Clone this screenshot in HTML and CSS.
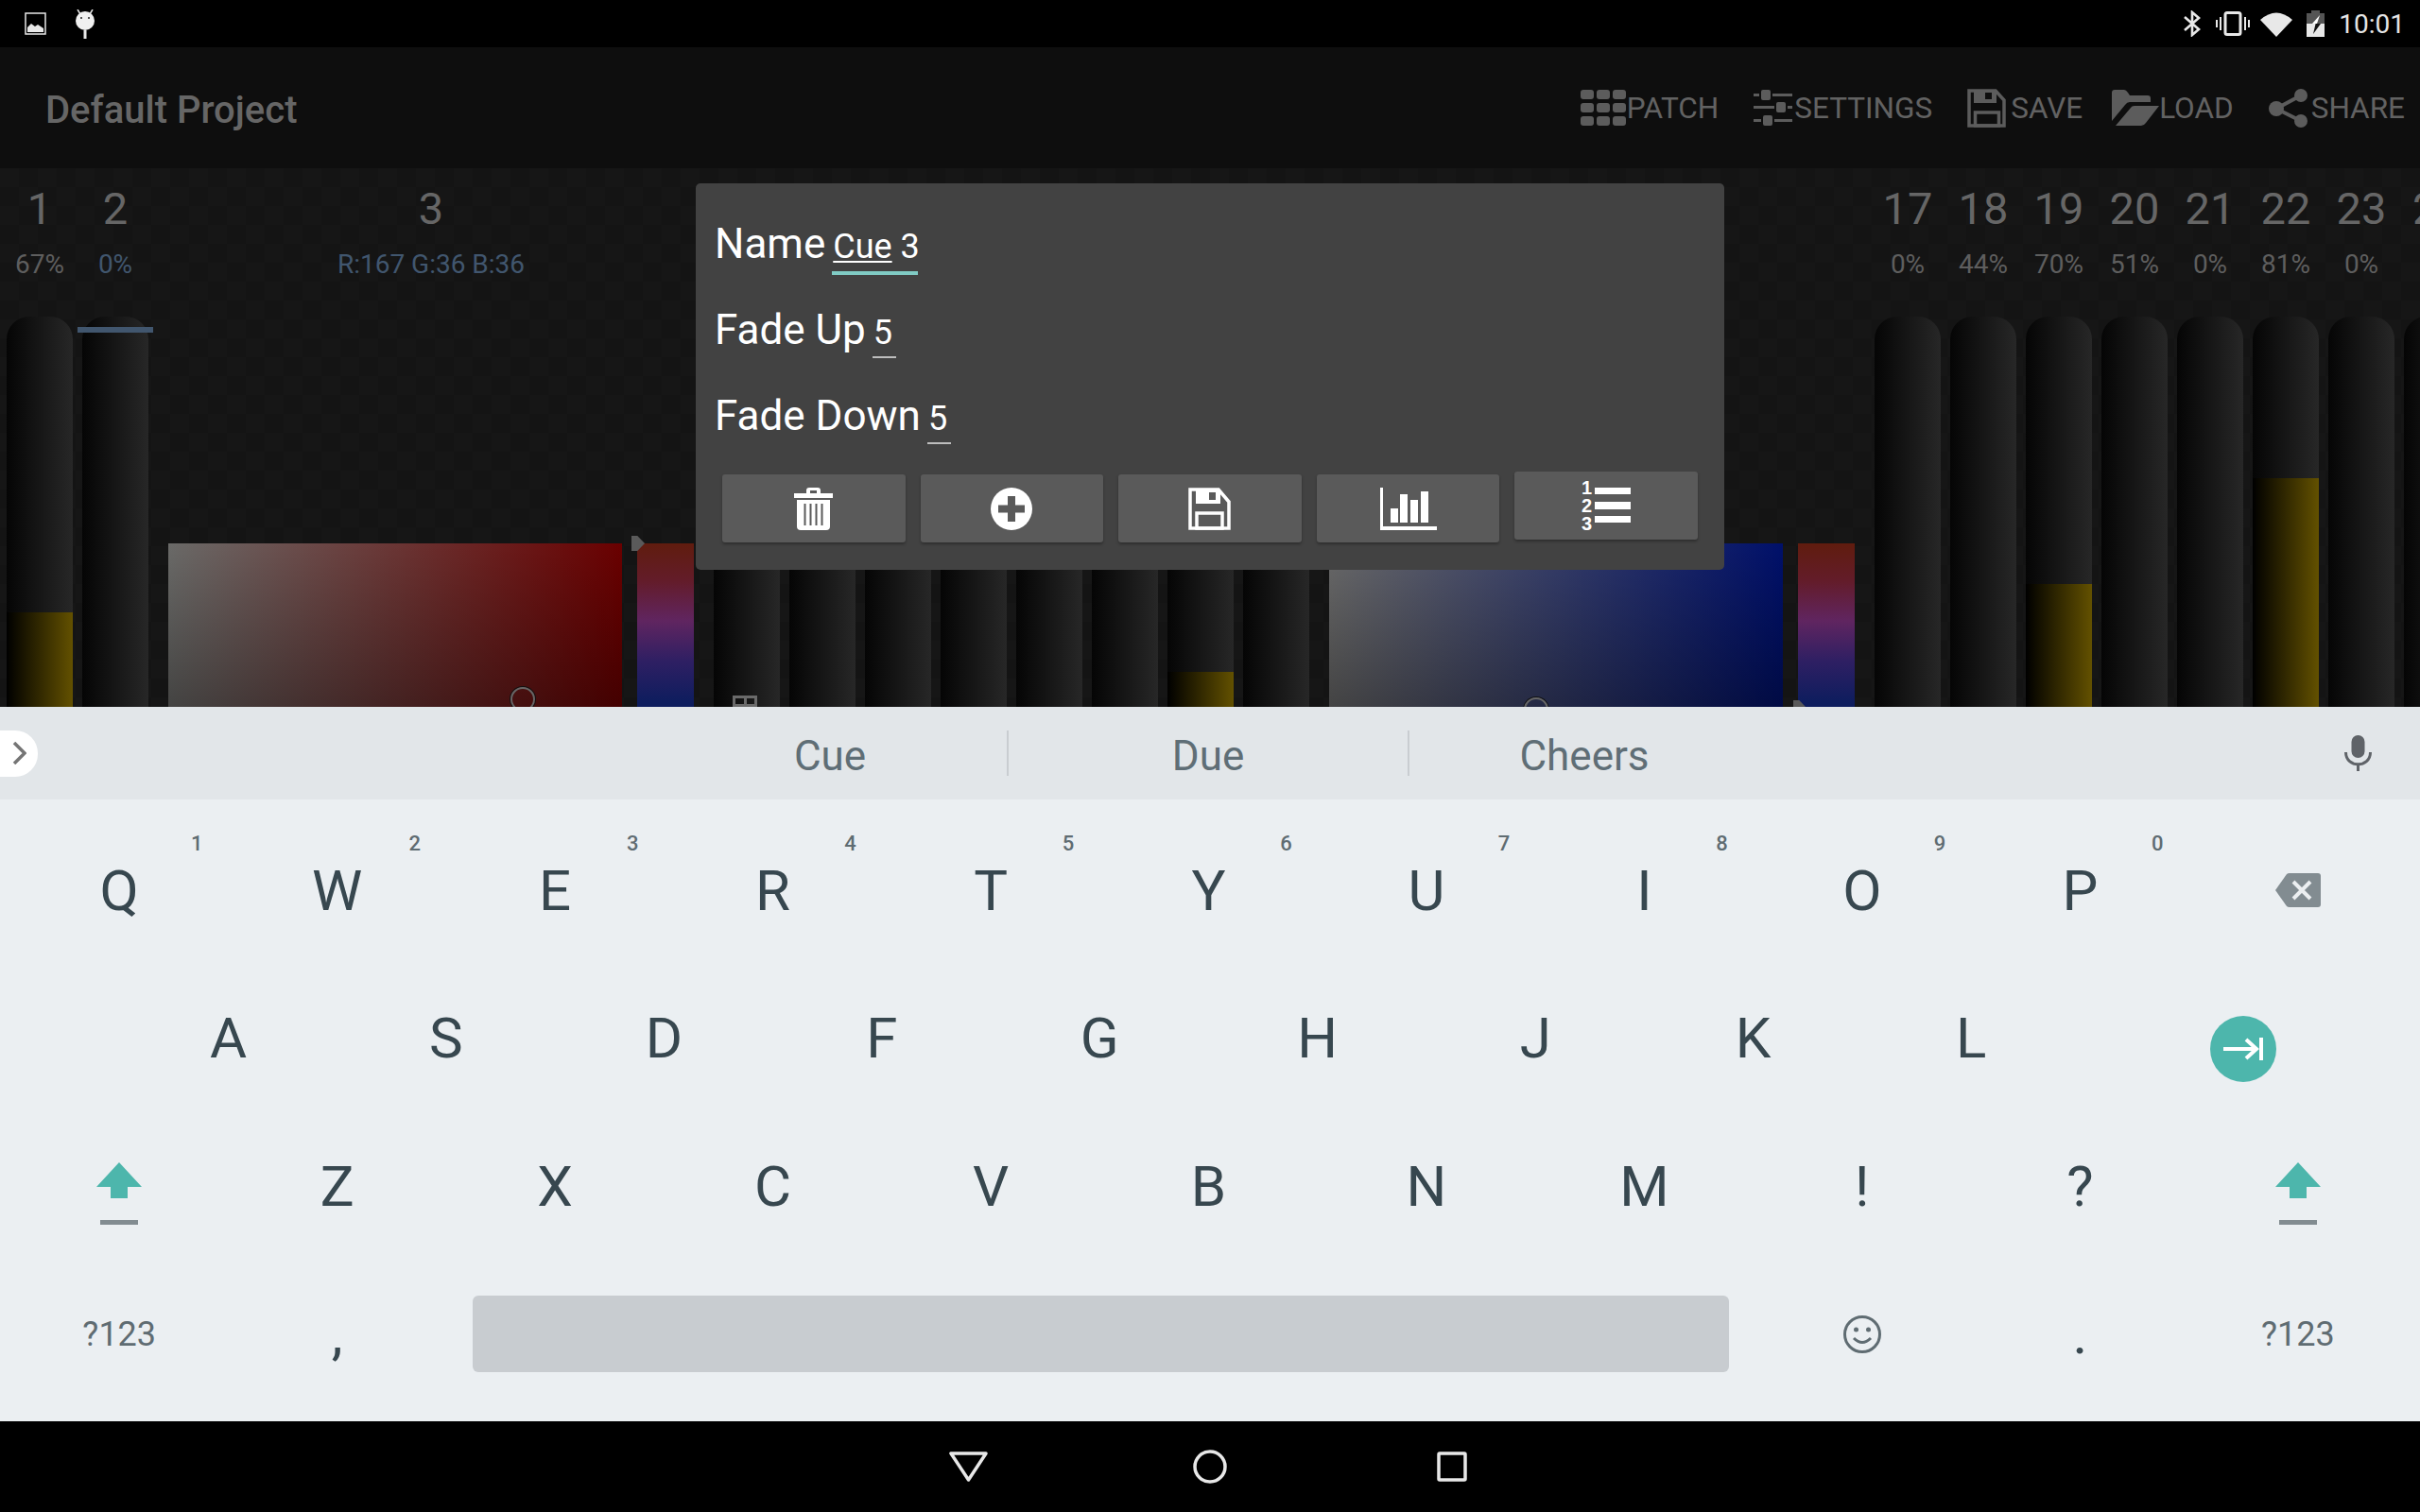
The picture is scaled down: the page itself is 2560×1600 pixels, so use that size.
FILE: index.html
```html
<!DOCTYPE html>
<html lang="en">

<head>
    <meta charset="UTF-8">
    <title>Default Project</title>
    <link rel="stylesheet" href="styles.css">
</head>

<body>
    <div class="page">
        <div class="status-bar">
            <div class="status-left">
                <svg class="ic-image" viewBox="0 0 23 24">
                    <rect x="1" y="1" width="21" height="22" fill="none" stroke="#e8e8e8" stroke-width="1.5" />
                    <path d="M3 21 V16 L7 12 L11 15 L14 13 L20 17 V21 Z" fill="#e8e8e8" />
                </svg>
                <svg class="ic-bug" viewBox="0 0 20 31">
                    <path d="M2 0 L5 5 M18 0 L15 5" stroke="#e8e8e8" stroke-width="1.5" />
                    <ellipse cx="10" cy="12" rx="10" ry="10" fill="#f0f0f0" />
                    <circle cx="6" cy="9" r="1" fill="#222" />
                    <circle cx="14" cy="9" r="1" fill="#222" />
                    <rect x="8.5" y="22" width="3" height="9" fill="#e8e8e8" />
                </svg>
            </div>
            <div class="status-right">
                <svg class="ic-bt" viewBox="0 0 18 28">
                    <path d="M1 7 L16 20 L9 26 V2 L16 8 L1 21" fill="none" stroke="#e8e8e8" stroke-width="2.6" />
                </svg>
                <svg class="ic-vibrate" viewBox="0 0 36 26">
                    <rect x="10" y="1.5" width="16" height="23" rx="2" fill="none" stroke="#e8e8e8" stroke-width="3" />
                    <path d="M1 9 V17 M5 6 V20 M31 6 V20 M35 9 V17" stroke="#e8e8e8" stroke-width="2" />
                </svg>
                <svg class="ic-wifi" viewBox="0 0 34 27">
                    <path d="M0 9 Q17 -6 34 9 L17 27 Z" fill="#e8e8e8" />
                </svg>
                <svg class="ic-battery" viewBox="0 0 19 28">
                    <path d="M5 0 H14 V3 H19 V14 H0 V3 H5 Z" fill="#555" />
                    <rect x="0" y="14" width="19" height="14" fill="#e8e8e8" />
                    <path d="M14 5 L6 14 H11 Z" fill="#fff" />
                    <path d="M6 14 H15 L7 25 L9.6 14 Z" fill="#111" />
                </svg>
                <span class="clock">10:01</span>
            </div>
        </div>

        <div class="app-bar">
            <div class="project-title">Default Project</div>
            <div class="actions">
                <div class="action patch">
                    <svg class="ic-patch" viewBox="0 0 48 38" fill="#5c5c5c">
                        <rect x="0" y="0" width="14" height="10" rx="3" />
                        <rect x="17" y="0" width="14" height="10" rx="3" />
                        <rect x="34" y="0" width="14" height="10" rx="3" />
                        <rect x="0" y="14" width="14" height="10" rx="3" />
                        <rect x="17" y="14" width="14" height="10" rx="3" />
                        <rect x="34" y="14" width="14" height="10" rx="3" />
                        <rect x="0" y="28" width="14" height="10" rx="3" />
                        <rect x="17" y="28" width="14" height="10" rx="3" />
                        <rect x="34" y="28" width="14" height="10" rx="3" />
                    </svg>
                    PATCH
                </div>
                <div class="action">
                    <svg class="ic-settings" viewBox="0 0 41 38" fill="#5c5c5c">
                        <rect x="0" y="4" width="6" height="3" />
                        <rect x="8" y="0" width="10" height="11" rx="2" />
                        <rect x="20" y="4" width="21" height="3" />
                        <rect x="0" y="17" width="22" height="3" />
                        <rect x="24" y="13" width="10" height="11" rx="2" />
                        <rect x="36" y="17" width="5" height="3" />
                        <rect x="0" y="31" width="8" height="3" />
                        <rect x="10" y="27" width="10" height="11" rx="2" />
                        <rect x="22" y="31" width="19" height="3" />
                    </svg>
                    SETTINGS
                </div>
                <div class="action save">
                    <svg class="ic-save" viewBox="0 0 41 41" fill="none" stroke="#5c5c5c">
                        <path d="M2 2 H30 L39 12 V39 H2 Z" stroke-width="3.5" />
                        <path d="M7 2 H31 V15 H7 Z M19 4 V11 H26 V4 Z" fill="#5c5c5c" fill-rule="evenodd" stroke="none" />
                        <rect x="8.5" y="25" width="25" height="14" stroke-width="3.5" />
                    </svg>
                    SAVE
                </div>
                <div class="action load">
                    <svg class="ic-load" viewBox="0 0 50 38" fill="#5c5c5c">
                        <path d="M0 3 Q0 0 3 0 H13 Q15 0 17 3 L19 6 H38 Q41 6 41 9 V13 H19 Q16 13 14 16 L0 33 Z" />
                        <path d="M4 38 L20 19 Q21 17 24 17 H50 L36 35 Q34 38 31 38 Z" />
                    </svg>
                    LOAD
                </div>
                <div class="action">
                    <svg class="ic-share" viewBox="0 0 43 41">
                        <path d="M34 7 L8 21 L34 34" fill="none" stroke="#5c5c5c" stroke-width="4" />
                        <circle cx="34" cy="7" r="7" fill="#5c5c5c" />
                        <circle cx="8" cy="21" r="8" fill="#5c5c5c" />
                        <circle cx="34" cy="34" r="7" fill="#5c5c5c" />
                    </svg>
                    SHARE
                </div>
            </div>
        </div>

        <div class="channels">
            <div class="channel">
                <div class="ch-num">1</div>
                <div class="ch-val">67%</div>
                <div class="fader">
                    <div class="fill" style="height: 68.5%"></div>
                </div>
            </div>
            <div class="channel">
                <div class="ch-num">2</div>
                <div class="ch-val blue">0%</div>
                <div class="fader"></div>
                <div class="selected-bar"></div>
            </div>
            <div class="channel color">
                <div class="ch-num">3</div>
                <div class="ch-val blue">R:167 G:36 B:36</div>
                <div class="picker">
                    <div class="sv red">
                        <div class="sv-ring ring-red"></div>
                    </div>
                    <div class="hue"></div>
                    <div class="hue-handle handle-red"></div>
                </div>
            </div>
            <div class="channel">
                <div class="fader covered">
                    <div class="grid-mark"></div>
                </div>
            </div>
            <div class="channel">
                <div class="fader covered"></div>
            </div>
            <div class="channel">
                <div class="fader covered"></div>
            </div>
            <div class="channel">
                <div class="fader covered"></div>
            </div>
            <div class="channel">
                <div class="fader covered"></div>
            </div>
            <div class="channel">
                <div class="fader covered"></div>
            </div>
            <div class="channel">
                <div class="fader covered">
                    <div class="fill" style="height: 62.2%"></div>
                </div>
            </div>
            <div class="channel">
                <div class="fader covered"></div>
            </div>
            <div class="channel color">
                <div class="picker covered">
                    <div class="sv navy">
                        <div class="sv-ring ring-navy"></div>
                    </div>
                    <div class="hue"></div>
                    <div class="hue-handle handle-navy"></div>
                </div>
            </div>
            <div class="channel">
                <div class="ch-num">17</div>
                <div class="ch-val">0%</div>
                <div class="fader"></div>
            </div>
            <div class="channel">
                <div class="ch-num">18</div>
                <div class="ch-val">44%</div>
                <div class="fader">
                    <div class="fill" style="height: 45%"></div>
                </div>
            </div>
            <div class="channel">
                <div class="ch-num">19</div>
                <div class="ch-val">70%</div>
                <div class="fader">
                    <div class="fill" style="height: 71.6%"></div>
                </div>
            </div>
            <div class="channel">
                <div class="ch-num">20</div>
                <div class="ch-val">51%</div>
                <div class="fader">
                    <div class="fill" style="height: 52.1%"></div>
                </div>
            </div>
            <div class="channel">
                <div class="ch-num">21</div>
                <div class="ch-val">0%</div>
                <div class="fader"></div>
            </div>
            <div class="channel">
                <div class="ch-num">22</div>
                <div class="ch-val">81%</div>
                <div class="fader">
                    <div class="fill" style="height: 82.8%"></div>
                </div>
            </div>
            <div class="channel">
                <div class="ch-num">23</div>
                <div class="ch-val">0%</div>
                <div class="fader"></div>
            </div>
            <div class="channel last">
                <div class="ch-num">24</div>
                <div class="fader covered"></div>
            </div>
        </div>

        <div class="keyboard">
            <div class="suggestions">
                <div class="strip-left">
                    <div class="more-pill">
                        <svg viewBox="0 0 15 24" width="15" height="24">
                            <path d="M2 1 L13 12 L2 23" fill="none" stroke="#757575" stroke-width="3.5" />
                        </svg>
                    </div>
                </div>
                <div class="suggestion first">Cue</div>
                <div class="suggestion">Due</div>
                <div class="suggestion last">Cheers</div>
                <div class="strip-right">
                    <svg viewBox="0 0 29 38" width="29" height="38">
                        <rect x="7.5" y="0" width="14" height="24" rx="7" fill="#5f6368" />
                        <path d="M1.5 18 C1.5 35 27.5 35 27.5 18" fill="none" stroke="#5f6368" stroke-width="3" />
                        <rect x="13" y="30" width="3" height="8" fill="#5f6368" />
                    </svg>
                </div>
            </div>

            <div class="keys">
                <div class="key-row">
                    <div class="key">Q<span class="hint">1</span></div>
                    <div class="key">W<span class="hint">2</span></div>
                    <div class="key">E<span class="hint">3</span></div>
                    <div class="key">R<span class="hint">4</span></div>
                    <div class="key">T<span class="hint">5</span></div>
                    <div class="key">Y<span class="hint">6</span></div>
                    <div class="key">U<span class="hint">7</span></div>
                    <div class="key">I<span class="hint">8</span></div>
                    <div class="key">O<span class="hint">9</span></div>
                    <div class="key">P<span class="hint">0</span></div>
                    <div class="key">
                        <svg viewBox="0 0 48 36" width="48" height="36">
                            <path d="M0 18 L12 1 Q13 0 15 0 H45 Q48 0 48 3 V33 Q48 36 45 36 H15 Q13 36 12 35 Z" fill="#828c91" />
                            <path d="M19 9 L37 27 M37 9 L19 27" stroke="#eceff1" stroke-width="4" />
                        </svg>
                    </div>
                </div>
                <div class="key-row">
                    <div class="key half"></div>
                    <div class="key">A</div>
                    <div class="key">S</div>
                    <div class="key">D</div>
                    <div class="key">F</div>
                    <div class="key">G</div>
                    <div class="key">H</div>
                    <div class="key">J</div>
                    <div class="key">K</div>
                    <div class="key">L</div>
                    <div class="key wide">
                        <div class="enter-btn">
                            <svg viewBox="0 0 42 24" width="42" height="24">
                                <path d="M0 12 H36 M24 2 L35 12 L24 22" fill="none" stroke="#fff" stroke-width="4" />
                                <rect x="38" y="0" width="4" height="24" fill="#fff" />
                            </svg>
                        </div>
                    </div>
                </div>
                <div class="key-row">
                    <div class="key">
                        <svg class="ic-shift" viewBox="0 0 48 66">
                            <path d="M24 0 L48 26 H33 V38 H15 V26 H0 Z" fill="#4db6ac" />
                            <rect x="4" y="61" width="40" height="5" fill="#828c91" />
                        </svg>
                    </div>
                    <div class="key">Z</div>
                    <div class="key">X</div>
                    <div class="key">C</div>
                    <div class="key">V</div>
                    <div class="key">B</div>
                    <div class="key">N</div>
                    <div class="key">M</div>
                    <div class="key">!</div>
                    <div class="key">?</div>
                    <div class="key">
                        <svg class="ic-shift" viewBox="0 0 48 66">
                            <path d="M24 0 L48 26 H33 V38 H15 V26 H0 Z" fill="#4db6ac" />
                            <rect x="4" y="61" width="40" height="5" fill="#828c91" />
                        </svg>
                    </div>
                </div>
                <div class="key-row">
                    <div class="key small">?123</div>
                    <div class="key">,</div>
                    <div class="key space">
                        <div class="space-bar"></div>
                    </div>
                    <div class="key">
                        <svg viewBox="0 0 40 40" width="40" height="40" fill="none" stroke="#5f6c72" stroke-width="3">
                            <circle cx="20" cy="20" r="18.5" />
                            <path d="M11 24 Q20 33 29 24" />
                            <circle cx="13.5" cy="15" r="2.5" fill="#5f6c72" stroke="none" />
                            <circle cx="26.5" cy="15" r="2.5" fill="#5f6c72" stroke="none" />
                        </svg>
                    </div>
                    <div class="key">.</div>
                    <div class="key small">?123</div>
                </div>
            </div>
        </div>

        <div class="nav-bar">
            <svg viewBox="0 0 41 32" width="41" height="32">
                <path d="M2 2 H39 L20.5 30 Z" fill="none" stroke="#e8e8e8" stroke-width="3.5" stroke-linejoin="round" />
            </svg>
            <svg viewBox="0 0 36 36" width="36" height="36">
                <circle cx="18" cy="18" r="16" fill="none" stroke="#e8e8e8" stroke-width="3.5" />
            </svg>
            <svg viewBox="0 0 32 32" width="32" height="32">
                <rect x="2" y="2" width="28" height="28" rx="1" fill="none" stroke="#e8e8e8" stroke-width="3.5" />
            </svg>
        </div>

        <!-- cue dialog, sits over the channels -->
        <div class="cue-dialog">
            <div class="form-row">
                <span class="form-label">Name</span>
                <span class="field focused"><span class="misspelled">Cue</span> 3</span>
            </div>
            <div class="form-row">
                <span class="form-label">Fade Up</span>
                <span class="field">5</span>
            </div>
            <div class="form-row">
                <span class="form-label">Fade Down</span>
                <span class="field">5</span>
            </div>
            <div class="dialog-buttons">
                <div class="dialog-btn">
                    <svg viewBox="0 0 41 45" width="41" height="45">
                        <path d="M13 6 V3 Q13 0 16 0 H25 Q28 0 28 3 V6 H41 V11 H0 V6 Z M17 3 V6 H24 V3 Z" fill="#fff" fill-rule="evenodd" />
                        <path d="M3 13 H38 V41 Q38 45 34 45 H7 Q3 45 3 41 Z" fill="#fff" />
                        <path d="M11.5 17 V40 M17.5 17 V40 M23.5 17 V40 M29.5 17 V40" stroke="#5a5a5a" stroke-width="2" />
                    </svg>
                </div>
                <div class="dialog-btn">
                    <svg viewBox="0 0 44 45" width="44" height="45">
                        <ellipse cx="22" cy="22.5" rx="22" ry="22.5" fill="#fff" />
                        <path d="M18 9 H26 V18.5 H36 V26.5 H26 V36 H18 V26.5 H8 V18.5 H18 Z" fill="#5a5a5a" />
                    </svg>
                </div>
                <div class="dialog-btn">
                    <svg viewBox="0 0 45 45" width="45" height="45" fill="none" stroke="#fff" stroke-width="3.5">
                        <path d="M2 2 H32 L43 15 V43 H2 Z" />
                        <path d="M8 2 H34 V17 H8 Z M22 5 V13 H29 V5 Z" fill="#fff" fill-rule="evenodd" stroke="none" />
                        <rect x="9" y="27" width="27" height="16" />
                    </svg>
                </div>
                <div class="dialog-btn">
                    <svg viewBox="0 0 60 45" width="60" height="45" fill="#fff">
                        <path d="M0 0 H3 V41 H60 V45 H0 Z" />
                        <rect x="11" y="22" width="8" height="15" />
                        <rect x="21" y="7" width="8" height="30" />
                        <rect x="32" y="13" width="8" height="24" />
                        <rect x="43" y="4" width="8" height="33" />
                    </svg>
                </div>
                <div class="dialog-btn raised">
                    <svg viewBox="0 0 53 54" width="53" height="54" fill="#fff">
                        <text class="list-digit" x="0" y="15">1</text>
                        <text class="list-digit" x="0" y="34">2</text>
                        <text class="list-digit" x="0" y="53">3</text>
                        <rect x="14" y="8" width="38" height="7" />
                        <rect x="14" y="23" width="38" height="8" />
                        <rect x="14" y="38" width="38" height="7" />
                    </svg>
                </div>
            </div>
        </div>
    </div>
</body>

</html>
```

FILE: styles.css
```css
* {
    box-sizing: border-box;
}

body {
    margin: 0;
    background-color: #000000;
    font-family: Roboto, "Liberation Sans", sans-serif;
}

.page {
    position: relative;
    display: flex;
    flex-direction: column;
    width: 2560px;
    height: 1600px;
    overflow: hidden;
}

/* status bar */
.status-bar {
    display: flex;
    justify-content: space-between;
    align-items: center;
    height: 50px;
    flex: none;
    padding: 0 16px 0 26px;
    background-color: #000000;
}

.status-left,
.status-right {
    display: flex;
    align-items: center;
}

.ic-image {
    width: 23px;
    height: 24px;
}

.ic-bug {
    width: 20px;
    height: 31px;
    margin-left: 31px;
}

.ic-bt {
    width: 18px;
    height: 28px;
}

.ic-vibrate {
    width: 36px;
    height: 26px;
    margin-left: 16px;
}

.ic-wifi {
    width: 34px;
    height: 27px;
    margin-left: 11px;
}

.ic-battery {
    width: 19px;
    height: 28px;
    margin-left: 15px;
}

.clock {
    margin-left: 15px;
    color: #e4e4e4;
    font-size: 28px;
}

/* app bar */
.app-bar {
    display: flex;
    justify-content: space-between;
    align-items: center;
    height: 128px;
    flex: none;
    padding: 0 16px 0 48px;
    background-color: #0e0e0e;
}

.project-title {
    padding-top: 5px;
    color: #666666;
    font-size: 40px;
    font-weight: 500;
}

.actions {
    display: flex;
    align-items: center;
    gap: 37px;
}

.action {
    display: flex;
    align-items: center;
    gap: 2px;
    color: #626262;
    font-size: 31.5px;
}

.action.patch {
    gap: 1px;
}

.action.save {
    gap: 5px;
}

.action.load {
    gap: 0;
    margin-left: -6px;
}

.ic-patch {
    width: 48px;
    height: 38px;
}

.ic-settings {
    width: 41px;
    height: 38px;
}

.ic-save {
    width: 41px;
    height: 41px;
}

.ic-load {
    width: 50px;
    height: 38px;
}

.ic-share {
    width: 43px;
    height: 41px;
}

/* channels */
.channels {
    display: flex;
    height: 570px;
    flex: none;
    padding-left: 2px;
    overflow: hidden;
    background: repeating-conic-gradient(#141414 0 25%, #161616 0 50%) 0 0 / 40px 40px;
}

.channel {
    position: relative;
    width: 80px;
    flex: none;
    padding-top: 15px;
    text-align: center;
}

.channel.color {
    width: 588px;
}

.channel.last {
    width: 40px;
    overflow: hidden;
    text-align: left;
}

.channel.last .ch-num {
    padding-left: 14px;
}

.ch-num {
    height: 56px;
    color: #666666;
    font-size: 47px;
    line-height: 56px;
    white-space: nowrap;
}

.ch-val {
    height: 36px;
    margin-top: 13px;
    margin-bottom: 37px;
    color: #5e5e5e;
    font-size: 28px;
    line-height: 36px;
    white-space: nowrap;
}

.ch-val.blue {
    color: #41566e;
}

.fader {
    position: relative;
    width: 70px;
    height: 995px;
    margin-left: 5px;
    overflow: hidden;
    border-radius: 24px 24px 0 0;
    background: linear-gradient(to right, #050505, #272727);
}

/* channels that lie under the dialog have no readable head */
.fader.covered {
    margin-top: 142px;
}

.channel.last .fader.covered {
    margin-top: 86px;
}

.fill {
    position: absolute;
    left: 0;
    right: 0;
    bottom: 0;
    background: linear-gradient(to right, #000000, #635100);
}

.selected-bar {
    position: absolute;
    top: 168px;
    left: 0;
    width: 80px;
    height: 6px;
    background-color: #41566e;
}

.grid-mark {
    position: absolute;
    top: 401px;
    left: 20px;
    width: 26px;
    height: 40px;
    border: 3px solid #6a6a6a;
    background:
        linear-gradient(#6a6a6a, #6a6a6a) 0 6px / 100% 3px no-repeat,
        linear-gradient(#6a6a6a, #6a6a6a) 50% 0 / 3px 100% no-repeat;
}

.picker {
    position: relative;
    display: flex;
    gap: 16px;
    margin-top: 277px;
    padding-left: 16px;
}

.picker.covered {
    margin-top: 382px;
}

.sv {
    position: relative;
    width: 480px;
    height: 480px;
}

.sv.red {
    background:
        linear-gradient(to bottom, transparent, #000000),
        linear-gradient(to right, #6a6a68, #6a0000);
}

.sv.navy {
    background:
        linear-gradient(to bottom, transparent, #000000),
        linear-gradient(to right, #6a6a6a, #00106a);
}

.sv-ring {
    position: absolute;
    width: 26px;
    height: 26px;
    border: 2px solid #666666;
    border-radius: 50%;
    box-shadow: 0 0 0 1px #111111;
}

.ring-red {
    top: 152px;
    left: 362px;
}

.ring-navy {
    top: 163px;
    left: 206px;
}

.hue {
    width: 60px;
    height: 480px;
    background: linear-gradient(to bottom, #601c0e 0, #631c2a 40px, #602560 82px, #2e1f63 125px, #0e1d5e 168px, #0e1d5e 480px);
}

.hue-handle {
    position: absolute;
    width: 14px;
    height: 16px;
    background-color: #5a5a5a;
    clip-path: polygon(0 0, 45% 0, 100% 50%, 45% 100%, 0 100%);
}

.handle-red {
    top: -8px;
    left: 506px;
}

.handle-navy {
    top: 166px;
    left: 507px;
}

/* keyboard */
.keyboard {
    height: 756px;
    flex: none;
    background-color: #ebeff2;
}

.suggestions {
    display: grid;
    grid-template-columns: 643px 424px 424px 424px 1fr;
    align-items: center;
    height: 98px;
    background-color: #e2e6e9;
}

.strip-left {
    display: flex;
}

.more-pill {
    display: flex;
    align-items: center;
    justify-content: flex-end;
    width: 40px;
    height: 49px;
    padding-right: 12px;
    border-radius: 0 24px 24px 0;
    background-color: #ffffff;
}

.suggestion {
    height: 48px;
    border-right: 2px solid #c9cdd1;
    color: #5f6e76;
    font-size: 44px;
    line-height: 55px;
    text-align: center;
}

.suggestion.first {
    padding-left: 48px;
}

.suggestion.last {
    padding-right: 54px;
    border-right: none;
}

.strip-right {
    display: flex;
    justify-content: flex-end;
    padding-right: 51px;
}

.keys {
    padding: 18px 14px 14px 11px;
}

.key-row {
    display: flex;
    height: 156.5px;
}

.key {
    position: relative;
    display: flex;
    flex: 1 1 0;
    align-items: center;
    justify-content: center;
    color: #37474f;
    font-size: 60px;
}

.key.half {
    flex-grow: 0.5;
}

.key.wide {
    flex-grow: 1.5;
}

.key.space {
    flex-grow: 6;
}

.key.small {
    color: #5f6c72;
    font-size: 36px;
}

.hint {
    position: absolute;
    top: 16px;
    left: 191px;
    color: #5f6c72;
    font-size: 22px;
    font-weight: 500;
}

.space-bar {
    flex: 1;
    height: 81px;
    margin: 0 26px 0 28px;
    border-radius: 6px;
    background-color: #c8ccd0;
}

.enter-btn {
    display: flex;
    align-items: center;
    justify-content: center;
    width: 70px;
    height: 70px;
    margin-top: 22px;
    border-radius: 50%;
    background-color: #4db6ac;
}

.ic-shift {
    width: 48px;
    height: 66px;
    margin-top: 16px;
}

/* nav bar */
.nav-bar {
    display: grid;
    grid-template-columns: repeat(3, 256px);
    flex: 1;
    align-items: center;
    justify-content: center;
    justify-items: center;
    background-color: #000000;
}

/* cue dialog */
.cue-dialog {
    position: absolute;
    top: 194px;
    left: 736px;
    width: 1088px;
    height: 409px;
    padding: 19px 28px 0 20px;
    border-radius: 5px;
    background-color: #424242;
}

.form-row {
    display: flex;
    align-items: baseline;
    gap: 7px;
    height: 91px;
    line-height: 90px;
}

.form-label {
    color: #ffffff;
    font-size: 44px;
}

.field {
    min-width: 25px;
    padding: 0 1px 7px;
    border-bottom: 2px solid #bdbdbd;
    color: #ffffff;
    font-size: 36px;
    line-height: 36px;
    white-space: nowrap;
}

.field.focused {
    width: 91px;
    padding-bottom: 8px;
    border-bottom: 4px solid #80cbc4;
}

.misspelled {
    text-decoration: underline;
    text-decoration-thickness: 2px;
    text-underline-offset: 3px;
}

.dialog-buttons {
    display: flex;
    align-items: flex-start;
    gap: 16px;
    margin-top: 16px;
    margin-left: 8px;
}

.dialog-btn {
    display: flex;
    align-items: center;
    justify-content: center;
    width: 193.6px;
    height: 72px;
    border-radius: 3px;
    background-color: #5a5a5a;
    box-shadow: 0 2px 3px rgba(0, 0, 0, 0.3);
}

.dialog-btn.raised {
    margin-top: -3px;
}

.list-digit {
    font-family: "Liberation Sans", sans-serif;
    font-size: 20px;
    font-weight: bold;
}
```
